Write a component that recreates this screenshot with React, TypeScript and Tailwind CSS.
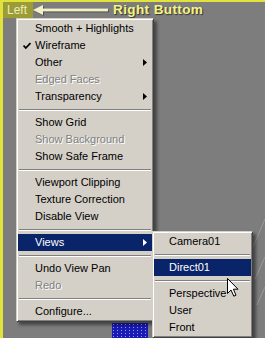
import React from "react";

type Entry = {
  label?: string;
  sep?: boolean;
  disabled?: boolean;
  checked?: boolean;
  sub?: boolean;
  active?: boolean;
};

const mainItems: Entry[] = [
  { label: "Smooth + Highlights" },
  { label: "Wireframe", checked: true },
  { label: "Other", sub: true },
  { label: "Edged Faces", disabled: true },
  { label: "Transparency", sub: true },
  { sep: true },
  { label: "Show Grid" },
  { label: "Show Background", disabled: true },
  { label: "Show Safe Frame" },
  { sep: true },
  { label: "Viewport Clipping" },
  { label: "Texture Correction" },
  { label: "Disable View" },
  { sep: true },
  { label: "Views", sub: true, active: true },
  { sep: true },
  { label: "Undo View Pan" },
  { label: "Redo", disabled: true },
  { sep: true },
  { label: "Configure..." },
];

const viewItems: Entry[] = [
  { label: "Camera01" },
  { sep: true },
  { label: "Direct01", active: true },
  { sep: true },
  { label: "Perspective" },
  { label: "User" },
  { label: "Front" },
];

// classic win9x raised panel
const panel =
  "bg-[#d4d0c8] border border-[#d4d0c8] border-r-[#404040] border-b-[#404040] p-px shadow-[inset_1px_1px_0_#fff,inset_-1px_-1px_0_#808080,3px_3px_3px_rgba(0,0,0,0.45)]";

function Separator() {
  return (
    <div className="h-[9px] flex flex-col justify-center px-px">
      <div className="h-px bg-[#808080]" />
      <div className="h-px bg-white" />
    </div>
  );
}

function Check() {
  return (
    <svg width="8" height="8" viewBox="0 0 8 8" className="absolute left-[5px] top-[5px]">
      <path d="M0.5 3.5 L2.8 6 L7.5 1" fill="none" stroke="#000" strokeWidth="1.8" />
    </svg>
  );
}

function Arrow({ white }: { white?: boolean }) {
  return (
    <svg width="4" height="7" viewBox="0 0 4 7" className="absolute right-[5px] top-[5px]">
      <path d="M0 0 L4 3.5 L0 7 Z" fill={white ? "#fff" : "#000"} />
    </svg>
  );
}

function Item({ e, pl, children }: { e: Entry; pl: string; children?: React.ReactNode }) {
  const color = e.active
    ? "bg-[#0a246a] text-white"
    : e.disabled
      ? "text-[#808080] [text-shadow:1px_1px_0_#fff]"
      : "text-black";
  return (
    <div className={`relative h-[17px] leading-[17px] whitespace-nowrap ${pl} ${color}`}>
      {e.checked && <Check />}
      {e.label}
      {e.sub && <Arrow white={e.active} />}
      {children}
    </div>
  );
}

function Cursor() {
  return (
    <svg width="13" height="20" viewBox="0 0 13 20" className="absolute z-30 left-[224px] top-[276px]">
      <path
        d="M0.5 0.5 L0.5 15.5 L4 12 L6.8 18.2 L9 17.2 L6.4 11.2 L11 11.2 Z"
        fill="#fff"
        stroke="#000"
        strokeWidth="1"
      />
    </svg>
  );
}

function BluePatch() {
  return (
    <svg width="36" height="16" className="absolute left-[109px] top-[321px]">
      <defs>
        <pattern id="dots" width="4" height="3" patternUnits="userSpaceOnUse">
          <rect width="4" height="3" fill="#1a1ab4" />
          <rect x="1" y="1" width="1" height="1" fill="#9a9aff" />
        </pattern>
      </defs>
      <rect width="36" height="16" fill="url(#dots)" />
    </svg>
  );
}

export default function App() {
  return (
    <div className="relative w-[265px] h-[338px] overflow-hidden bg-[#7d7d7d] border-t-2 border-l-[3px] border-[#e2e23c] font-[family-name:Liberation_Sans,Arial,sans-serif] text-[11px]">
      <BluePatch />
      <svg width="12" height="120" className="absolute left-[250px] top-[215px]">
        <path d="M12 2 L0 30 M12 40 L2 62 M12 70 L4 88" stroke="#9a9a9a" strokeWidth="1" />
      </svg>

      {/* header */}
      <div className="flex items-center h-[16px]">
        <div className="w-[30px] h-full bg-[#9c9c34] text-[#ececc4] text-[12px] leading-[16px] pl-[4px]">
          Left
        </div>
        <svg width="76" height="12" viewBox="0 0 76 12" className="shrink-0 drop-shadow-[1px_1px_0_rgba(0,0,0,0.35)]">
          <path d="M0 6 L10 1 L10 11 Z" fill="#f2f2c6" />
          <rect x="9" y="4.6" width="66" height="2.8" fill="#f2f2c6" />
        </svg>
        <div className="ml-[4px] font-bold text-[13.5px] leading-[16px] text-[#f4f484] [text-shadow:1px_1px_1px_rgba(0,0,0,0.6)] tracking-[0.4px]">
          Right Buttom
        </div>
      </div>

      {/* context menu */}
      <div className={`ml-[13px] w-[138px] ${panel} relative z-10`}>
        {mainItems.map((e, i) =>
          e.sep ? (
            <Separator key={i} />
          ) : (
            <Item key={i} e={e} pl="pl-[17px]">
              {e.label === "Views" && (
                <div className={`absolute left-full -top-[3px] w-[101px] ${panel}`}>
                  {viewItems.map((v, j) =>
                    v.sep ? <Separator key={j} /> : <Item key={j} e={v} pl="pl-[15px]" />
                  )}
                </div>
              )}
            </Item>
          )
        )}
      </div>

      <Cursor />
    </div>
  );
}
